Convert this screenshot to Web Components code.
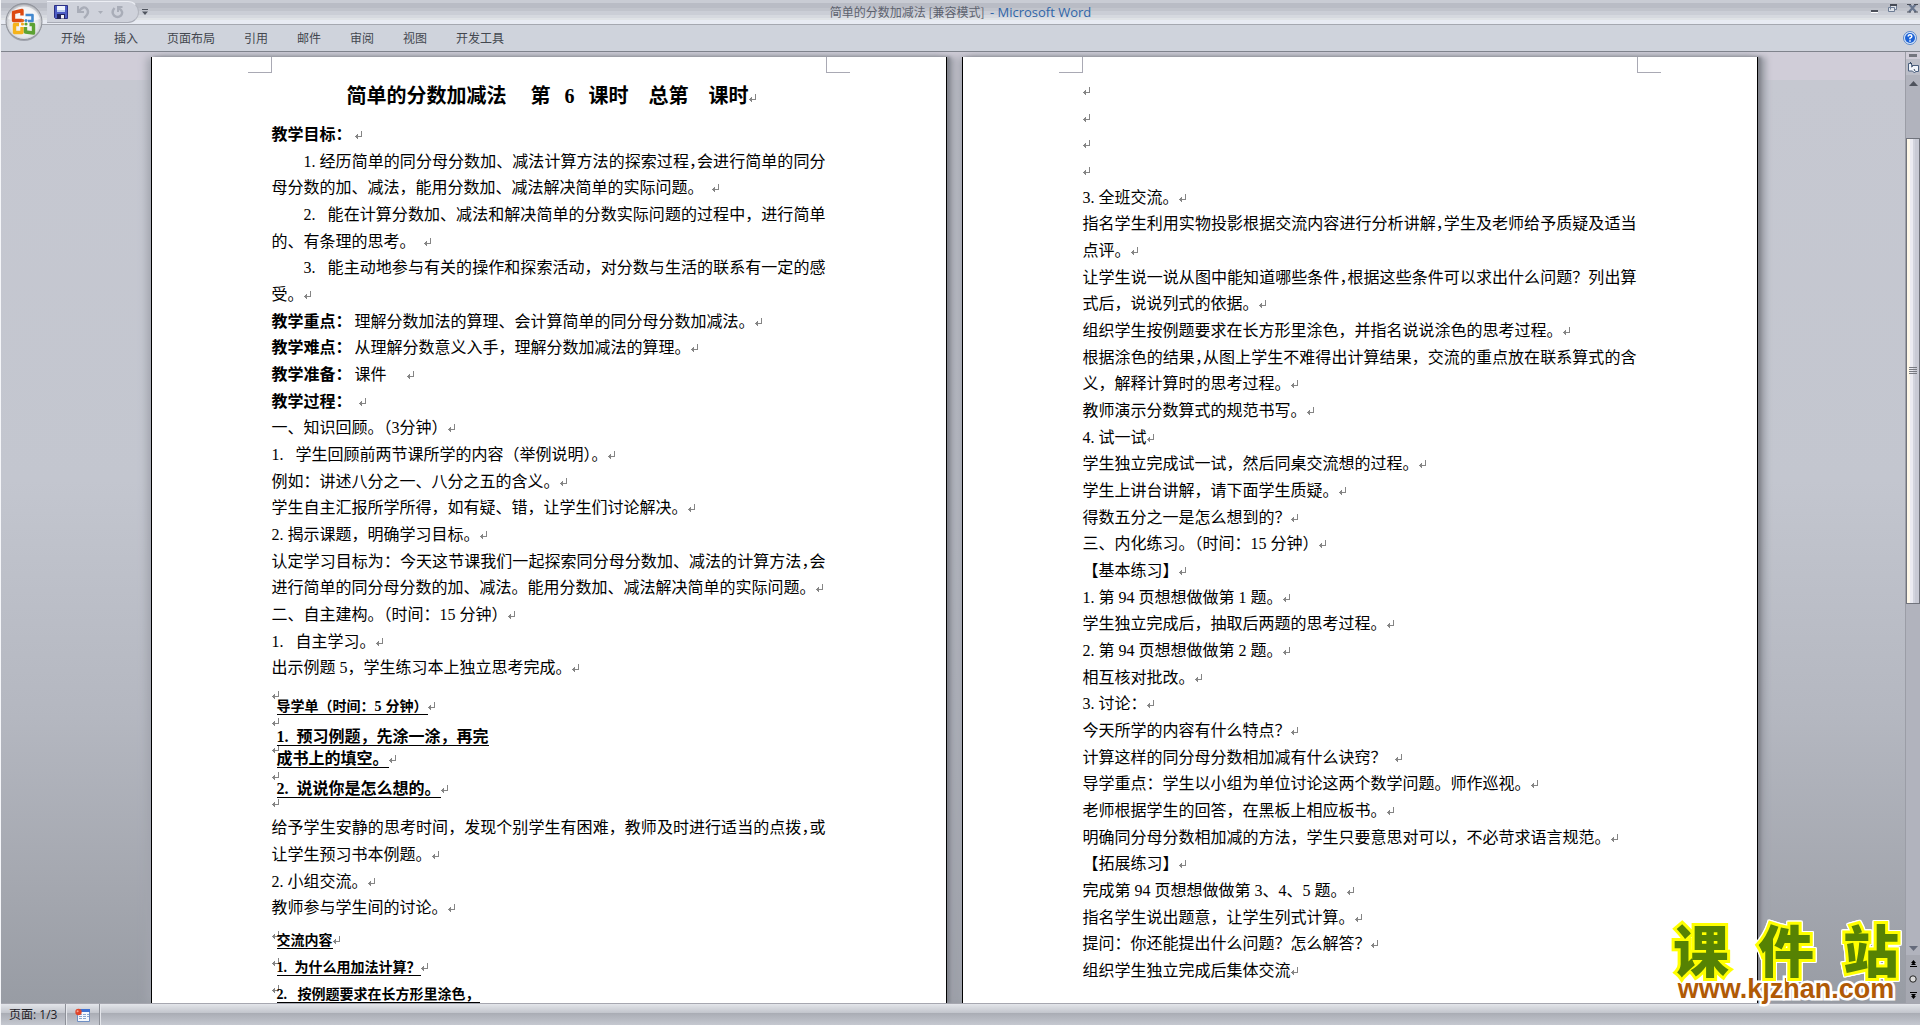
<!DOCTYPE html>
<html lang="zh-CN">
<head>
<meta charset="utf-8">
<title>简单的分数加减法 [兼容模式] - Microsoft Word</title>
<style>
html,body{height:100%;margin:0;overflow:hidden}
body{font-family:"Liberation Serif","Noto Sans CJK SC",serif;background:#c6c8d1}
</style>
</head>
<body>
<word-window>
  <title-bar slot="top" doc="简单的分数加减法 [兼容模式]" app="Microsoft Word"></title-bar>
  <ribbon-tabs slot="top">
    <ribbon-tab>开始</ribbon-tab><ribbon-tab>插入</ribbon-tab><ribbon-tab>页面布局</ribbon-tab><ribbon-tab>引用</ribbon-tab><ribbon-tab>邮件</ribbon-tab><ribbon-tab>审阅</ribbon-tab><ribbon-tab>视图</ribbon-tab><ribbon-tab>开发工具</ribbon-tab>
  </ribbon-tabs>

  <doc-page>
    <doc-title slot="title">简单的分数加减法<half-run gap="right">&nbsp;&nbsp;</half-run>第<half-run>&nbsp;</half-run><half-run gap="both">6</half-run><half-run>&nbsp;</half-run>课时<half-run>&nbsp;&nbsp;</half-run>总第<half-run>&nbsp;&nbsp;</half-run>课时</doc-title>
    <doc-line mark><doc-label>教学目标：</doc-label></doc-line>
    <doc-line indent fill><half-run>1.</half-run>经历简单的同分母分数加、减法计算方法的探索过程<tight-mark>，</tight-mark>会进行简单的同分</doc-line>
    <doc-line mark>母分数的加、减法，能用分数加、减法解决简单的实际问题。<half-run>&nbsp;</half-run></doc-line>
    <doc-line indent fill><half-run>2.&nbsp;</half-run>能在计算分数加、减法和解决简单的分数实际问题的过程中，进行简单</doc-line>
    <doc-line mark>的、有条理的思考。<half-run>&nbsp;</half-run></doc-line>
    <doc-line indent fill><half-run>3.&nbsp;</half-run>能主动地参与有关的操作和探索活动，对分数与生活的联系有一定的感</doc-line>
    <doc-line mark>受。</doc-line>
    <doc-line mark><doc-label>教学重点：</doc-label>理解分数加法的算理、会计算简单的同分母分数加减法。</doc-line>
    <doc-line mark><doc-label>教学难点：</doc-label>从理解分数意义入手，理解分数加减法的算理。</doc-line>
    <doc-line mark><doc-label>教学准备：</doc-label>课件<half-run gap="right">&nbsp;&nbsp;</half-run></doc-line>
    <doc-line mark><doc-label>教学过程：</doc-label>&nbsp;</doc-line>
    <doc-line mark>一、知识回顾。（<half-run>3</half-run>分钟）</doc-line>
    <doc-line mark><half-run>1.&nbsp;</half-run>学生回顾前两节课所学的内容（举例说明）。</doc-line>
    <doc-line mark>例如：讲述八分之一、八分之五的含义。</doc-line>
    <doc-line mark>学生自主汇报所学所得，如有疑、错，让学生们讨论解决。</doc-line>
    <doc-line mark><half-run>2.</half-run>揭示课题，明确学习目标。</doc-line>
    <doc-line fill>认定学习目标为：今天这节课我们一起探索同分母分数加、减法的计算方法<tight-mark>，</tight-mark>会</doc-line>
    <doc-line mark>进行简单的同分母分数的加、减法。能用分数加、减法解决简单的实际问题。</doc-line>
    <doc-line mark>二、自主建构。（时间：<half-run gap="right">15</half-run>分钟）</doc-line>
    <doc-line mark><half-run>1.&nbsp;</half-run>自主学习。</doc-line>
    <doc-line mark>出示例题<half-run gap="left">5</half-run>，学生练习本上独立思考完成。</doc-line>
    <text-frame rows="5" layout="guide">
      <frame-line size="small" mark>导学单（时间：<half-run gap="right">5</half-run>分钟）</frame-line>
      <frame-line><half-run gap="right">1.</half-run>预习例题，先涂一涂，再完</frame-line>
      <frame-line mark>成书上的填空。</frame-line>
      <frame-line mark><half-run gap="right">2.</half-run>说说你是怎么想的。</frame-line>
    </text-frame>
    <doc-line fill>给予学生安静的思考时间，发现个别学生有困难，教师及时进行适当的点拨<tight-mark>，</tight-mark>或</doc-line>
    <doc-line mark>让学生预习书本例题。</doc-line>
    <doc-line mark><half-run>2.</half-run>小组交流。</doc-line>
    <doc-line mark>教师参与学生间的讨论。</doc-line>
    <text-frame rows="3" layout="share">
      <frame-line size="small" mark>交流内容</frame-line>
      <frame-line size="small" mark><half-run gap="right">1.</half-run>为什么用加法计算？</frame-line>
      <frame-line size="small"><half-run>2.&nbsp;</half-run>按例题要求在长方形里涂色，</frame-line>
    </text-frame>
  </doc-page>

  <doc-page>
    <doc-line mark></doc-line>
    <doc-line mark></doc-line>
    <doc-line mark></doc-line>
    <doc-line mark></doc-line>
    <doc-line mark><half-run>3.</half-run>全班交流。</doc-line>
    <doc-line fill>指名学生利用实物投影根据交流内容进行分析讲解<tight-mark>，</tight-mark>学生及老师给予质疑及适当</doc-line>
    <doc-line mark>点评。</doc-line>
    <doc-line fill>让学生说一说从图中能知道哪些条件<tight-mark>，</tight-mark>根据这些条件可以求出什么问题？列出算</doc-line>
    <doc-line mark>式后，说说列式的依据。</doc-line>
    <doc-line mark>组织学生按例题要求在长方形里涂色，并指名说说涂色的思考过程。</doc-line>
    <doc-line fill>根据涂色的结果<tight-mark>，</tight-mark>从图上学生不难得出计算结果，交流的重点放在联系算式的含</doc-line>
    <doc-line mark>义，解释计算时的思考过程。</doc-line>
    <doc-line mark>教师演示分数算式的规范书写。</doc-line>
    <doc-line mark><half-run>4.</half-run>试一试</doc-line>
    <doc-line mark>学生独立完成试一试，然后同桌交流想的过程。</doc-line>
    <doc-line mark>学生上讲台讲解，请下面学生质疑。</doc-line>
    <doc-line mark>得数五分之一是怎么想到的？</doc-line>
    <doc-line mark>三、内化练习。（时间：<half-run gap="right">15</half-run>分钟）</doc-line>
    <doc-line mark>【基本练习】</doc-line>
    <doc-line mark><half-run>1.</half-run>第<half-run gap="both">94</half-run>页想想做做第<half-run gap="both">1</half-run>题。</doc-line>
    <doc-line mark>学生独立完成后，抽取后两题的思考过程。</doc-line>
    <doc-line mark><half-run>2.</half-run>第<half-run gap="both">94</half-run>页想想做做第<half-run gap="both">2</half-run>题。</doc-line>
    <doc-line mark>相互核对批改。</doc-line>
    <doc-line mark><half-run>3.</half-run>讨论：</doc-line>
    <doc-line mark>今天所学的内容有什么特点？</doc-line>
    <doc-line mark>计算这样的同分母分数相加减有什么诀窍？<half-run>&nbsp;</half-run></doc-line>
    <doc-line mark>导学重点：学生以小组为单位讨论这两个数学问题。师作巡视。</doc-line>
    <doc-line mark>老师根据学生的回答，在黑板上相应板书。</doc-line>
    <doc-line mark>明确同分母分数相加减的方法，学生只要意思对可以，不必苛求语言规范。</doc-line>
    <doc-line mark>【拓展练习】</doc-line>
    <doc-line mark>完成第<half-run gap="both">94</half-run>页想想做做第<half-run gap="left">3</half-run>、<half-run>4</half-run>、<half-run gap="right">5</half-run>题。</doc-line>
    <doc-line mark>指名学生说出题意，让学生列式计算。</doc-line>
    <doc-line mark>提问：你还能提出什么问题？怎么解答？</doc-line>
    <doc-line mark>组织学生独立完成后集体交流</doc-line>
  </doc-page>

  <scroll-rail slot="rail"></scroll-rail>
  <status-bar slot="bottom">页面: 1/3</status-bar>
  <site-logo slot="badge" name="课件站" url="www.kjzhan.com"></site-logo>
</word-window>

<script>
const define = (name, html, setup) => {
  const tpl = document.createElement('template');
  tpl.innerHTML = html.replace(/>\s+</g, '><').trim();
  customElements.define(name, class extends HTMLElement {
    constructor() {
      super();
      this.attachShadow({mode: 'open'}).append(tpl.content.cloneNode(true));
    }
    connectedCallback() { if (setup) setup(this, this.shadowRoot); }
  });
};

const RETURN_MARK = `<svg class="mark" width="8" height="9" viewBox="0 0 8 9" aria-hidden="true" shape-rendering="crispEdges"><path d="M6.500 0V5.500H2M2.500 3v5M1.500 4v3M0 5.500h3" fill="none" stroke="#858585"/></svg>`;

define('word-window', `
<style>
:host{display:grid;grid-template-rows:auto minmax(0,1fr) auto;height:100vh;position:relative;border-left:1px solid #f4f5f8;box-sizing:border-box}
.desk{display:flex;min-height:0;background:linear-gradient(#d0cdd8 0 28px,#c6c8d1 28px,#c3c6cf 45%,#b4b7c0 70%,#a4a7af 88%,#989ca4)}
.pages{flex:1;min-width:0;display:flex;justify-content:center;gap:15px;overflow:hidden;padding:5px 0 0 2px}
.badge{position:absolute;right:21px;bottom:22px}
</style>
<header><slot name="top"></slot></header>
<main class="desk"><div class="pages"><slot></slot></div><slot name="rail"></slot></main>
<footer><slot name="bottom"></slot></footer>
<div class="badge"><slot name="badge"></slot></div>`);

define('title-bar', `
<style>
:host{display:grid;grid-template-columns:1fr auto 1fr;align-items:center;height:24px;border-bottom:1px solid #a5a8b0;
 background:linear-gradient(#c9ccd4 0 3px,#b9bcc5 3px 8px,#c1c4cc 8px 11px,#cbced6 11px 15px,#d6d9df 15px 18px,#e0e3e6 18px 20px,#e8ebf3 20px);
 font:12px/16px "Noto Sans CJK SC",sans-serif;color:#5d626e}
button{all:unset;display:block;line-height:0}
.left{display:flex;align-items:center}
.quick{margin-left:46px;height:20px;width:84px;padding-left:7px;display:flex;align-items:center;gap:8px;border:1px solid #eceef4;border-left:0;border-bottom-color:#a9acb6;border-right-color:#b3b6bf;border-radius:0 12px 12px 0;background:#cfd2db}
.more{margin-left:3px}
.office{position:absolute;left:3px;top:2px;z-index:2}
h1{margin:0;font:inherit;white-space:pre}
h1 span{font-family:"Open Sans",sans-serif;color:#2f66a8;font-size:13px}
.win{display:flex;justify-content:flex-end;align-items:center;gap:9px;padding-right:2px;height:16px;align-self:start}
svg{display:block}
</style>
<div class="left">
<button class="office" aria-label="Office">
<svg width="40" height="40" viewBox="0 0 40 40"><defs><radialGradient id="b" cx=".5" cy=".55" r=".55"><stop offset="0" stop-color="#fff"/><stop offset=".7" stop-color="#e6e7ea"/><stop offset=".9" stop-color="#c4c6cb"/><stop offset="1" stop-color="#8d9098"/></radialGradient></defs>
<circle cx="20" cy="21" r="18" fill="#7e828c" opacity=".6"/><circle cx="20" cy="19.500" r="18" fill="url(#b)" stroke="#91949c"/>
<path d="M4 17a16.500 16.500 0 0 1 32 0q-16 6-32 0z" fill="#fff" opacity=".65"/>
<g fill="none" stroke-linejoin="round" stroke-width="3.400">
<path d="M18 17.500V18.500H9.500V10.500L18 8.500v5" stroke="#dd4a12"/><path d="M21.500 13h7v6h-4.500" stroke="#4389cf" stroke-width="2.600"/>
<path d="M18 25v5.500h-7.500V22.500H15" stroke="#f5b31c"/><path d="M21.500 25v5l8 1V22.500h-4" stroke="#5da233"/></g>
<circle cx="18.500" cy="18.500" r="1.600" fill="#e0611b"/><circle cx="22" cy="18.500" r="1.600" fill="#4389cf"/><circle cx="18.500" cy="22" r="1.600" fill="#f5a81c"/><circle cx="22" cy="22" r="1.600" fill="#5da233"/></svg></button>
<div class="quick">
<button aria-label="保存"><svg width="14" height="14" viewBox="0 0 14 14"><path d="M.5.5h13v13h-12l-1-1z" fill="#4c5cc4" stroke="#2b2f83"/><path d="M3 1h8v6H3z" fill="#eef3fc"/><path d="M3 5h8v2H3z" fill="#b9cdf0"/><path d="M3 9h8v5H3z" fill="#20235e"/><path d="M7 10h3v3.500H7z" fill="#f2f2f6"/></svg></button>
<button aria-label="撤消"><svg width="14" height="14" viewBox="0 0 14 14"><path d="M2 1v6h6" fill="none" stroke="#a9adb8" stroke-width="2"/><path d="M3 6Q8 0 11 4q3 4-3 9" fill="none" stroke="#a9adb8" stroke-width="2.400"/></svg></button>
<button aria-label="撤消列表"><svg width="5" height="3" viewBox="0 0 5 3"><path d="M0 0h5L2.500 3z" fill="#a9adb8"/></svg></button>
<button aria-label="重复"><svg width="13" height="14" viewBox="0 0 13 14"><path d="M3.500 3Q0 7 3 10.500q3.500 3 7 0 3-4-2-7" fill="none" stroke="#a9adb8" stroke-width="2.400"/><path d="M11.500 2H7v5" fill="none" stroke="#a9adb8" stroke-width="2"/></svg></button>
</div>
<button class="more" aria-label="自定义"><svg width="6" height="6" viewBox="0 0 6 6"><path d="M0 0h6v1H0zM0 2.500h6L3 6z" fill="#50555f"/></svg></button>
</div>
<h1></h1>
<div class="win">
<button aria-label="最小化"><svg width="8" height="14" viewBox="0 0 8 14"><path d="M0 9h7v2H0z" fill="#4c505a"/><path d="M0 11h7v1H0z" fill="#fff"/></svg></button>
<button aria-label="还原"><svg width="10" height="9" viewBox="0 0 10 9"><path d="M2.500 5.500V1.500h6v4h-2M.5 3.500h6v4h-6z" fill="#dfe3ea" stroke="#6d7c94"/><path d="M2 0h7v2H2z" fill="#454a55"/></svg></button>
<button aria-label="关闭"><svg width="11" height="9" viewBox="0 0 11 9"><path d="M2 0l7 8M9 0L2 8" stroke="#68768f" stroke-width="2.200"/><path d="M0 .500h4M7 .500h4M0 8h4M7 8h4" stroke="#4c505a"/></svg></button>
</div>`, (el, root) => {
  const h = root.querySelector('h1');
  const s = document.createElement('span');
  s.textContent = '- ' + el.getAttribute('app');
  h.replaceChildren(el.getAttribute('doc') + '  ', s);
});

define('ribbon-tabs', `
<style>
:host{display:flex;align-items:center;justify-content:space-between;height:26px;padding:0 3px 0 60px;background:#cfd3dc;border-bottom:1px solid #7f838c}
nav{display:flex;gap:29px}
button{all:unset;line-height:0}
</style>
<nav><slot></slot></nav>
<button aria-label="帮助"><svg width="14" height="14" viewBox="0 0 14 14"><circle cx="7" cy="7" r="6.500" fill="#dbe9fb" stroke="#5b86c8"/><circle cx="7" cy="7" r="5" fill="#1c62d6"/><path d="M5.200 5.600Q5.200 3.800 7 3.800T8.800 5.500Q8.800 6.500 7 7.300V8.300M7 9.200v1.500" fill="none" stroke="#fff" stroke-width="1.500"/></svg></button>`);

define('ribbon-tab', `
<style>
:host{display:block}
button{all:unset;font:12px/20px "Noto Sans CJK SC",sans-serif;color:#43474f;display:block;white-space:nowrap}
</style><button><slot></slot></button>`);

define('doc-page', `
<style>
:host{display:block;flex:none;width:554px;padding:0 120px;background:#fff;border:solid #000;border-width:0 1px;align-self:stretch;min-height:0;position:relative;
 box-shadow:3px 0 3px #80838b,8px 0 6px #9ea1aa,-4px 0 8px #a2a5ae}
.corners{display:flex;justify-content:space-between;margin:0 -24px;height:16px}
.corners i{width:23px;border:solid #a9a9b4;border-width:0 1px 1px 0}
.corners i+i{border-width:0 0 1px 1px}
.body{margin-top:4px;display:grid;grid-auto-rows:27px 27px 26px;align-items:center}
</style>
<div class="corners"><i></i><i></i></div>
<slot name="title"></slot>
<div class="body"><slot></slot></div>`);

define('doc-title', `
<style>
:host{display:block;margin:4px 0 6px;padding-left:6px;text-align:center;font-size:20px;font-weight:700;line-height:38px;white-space:nowrap}
</style><slot></slot>${RETURN_MARK}`);

define('doc-line', `
<style>
:host{display:block;font-size:16px;line-height:26px;white-space:nowrap;color:#000}
:host([indent]){padding-left:32px}
:host([fill]){text-align:justify;text-align-last:justify}
:host(:not([mark])) .mark{display:none}
</style><slot></slot>${RETURN_MARK}`);

define('doc-label', `
<style>:host{font-weight:700;margin-right:3px}</style><slot></slot>`);

define('tight-mark', `
<style>:host{font-feature-settings:"halt"}</style><slot></slot>`);

define('half-run', `
<style>
:host{display:inline-block;white-space:nowrap;text-align:left;text-align-last:left}
:host([gap=left]),:host([gap=both]){margin-left:4px}
:host([gap=right]),:host([gap=both]){margin-right:4px}
</style><slot></slot>`, el => { el.style.width = `calc(1em * ${el.textContent.length} / 2)`; });

define('text-frame', `
<style>
:host{display:grid;grid-template-columns:5px 1fr;align-self:start}
.marks{display:grid;grid-auto-rows:27px;line-height:28px;font-size:16px}
.lines{display:flex;flex-direction:column;align-items:flex-start}
:host([layout=guide]) .lines{padding-top:15px}
:host([layout=guide]) ::slotted(:nth-child(2)){margin-top:8px}
:host([layout=guide]) ::slotted(:nth-child(4)){margin-top:8px}
:host([layout=share]) .lines{padding-top:9px;gap:5px}
</style>
<div class="marks"></div><div class="lines"><slot></slot></div>`, (el, root) => {
  const rows = +el.getAttribute('rows');
  el.style.gridRow = 'span ' + rows;
  root.querySelector('.marks').innerHTML = `<span>${RETURN_MARK}</span>`.repeat(rows);
});

define('frame-line', `
<style>
:host{display:block;font-size:16px;font-weight:700;line-height:22px;white-space:nowrap}
:host([size=small]){font-size:14px}
span{border-bottom:1px solid #000}
:host(:not([mark])) .mark{display:none}
</style><span><slot></slot></span>${RETURN_MARK}`);

define('scroll-rail', `
<style>
:host{display:flex;flex-direction:column;flex:none;width:14px;background:#b1b3bd;border-left:1px solid #9b9da6}
button{all:unset;display:grid;place-items:center;box-sizing:border-box;width:100%}
.split{height:7px;background:#d0cdd8}
.split svg{display:block}
.ruler{height:16px;background:#bcbec8}
.up{height:16px}
.track{flex:1;display:flex;flex-direction:column;padding-top:47px;min-height:0}
.thumb{flex:0 0 58%;border:1px solid #70737c;box-sizing:border-box;display:grid;place-items:center;background:linear-gradient(90deg,#fff8e8 0 3px,#ebebf2 3px 6px,#d2d4de 6px 8px,#c8cad5 8px)}
.down{height:14px}
.nav{height:16px;background:#a6a8b1}
</style>
<div class="split"><svg width="13" height="6" viewBox="0 0 13 6"><path d="M3 2h8v3H3z" fill="#73757e"/></svg></div>
<button class="ruler" aria-label="标尺"><svg width="13" height="13" viewBox="0 0 13 13"><path d="M1.500 2.500h3v2h7v6h-3l-1 1.500-2-2h-4z" fill="#f1f4fa" stroke="#4a5f7e"/><path d="M3 1l2 2M7 8l1 2M4 6l2-1" stroke="#35475f"/></svg></button>
<button class="up" aria-label="向上滚动"><svg width="9" height="5" viewBox="0 0 9 5"><path d="M0 5h9L4.500 0z" fill="#4f535d"/></svg></button>
<div class="track"><div class="thumb"><svg width="8" height="8" viewBox="0 0 8 8" shape-rendering="crispEdges"><path d="M0 .500h8M0 2.500h8M0 4.500h8M0 6.500h8" stroke="#777a82"/></svg></div></div>
<button class="down" aria-label="向下滚动"><svg width="9" height="5" viewBox="0 0 9 5"><path d="M0 0h9L4.500 5z" fill="#656b7b"/></svg></button>
<button class="nav" aria-label="前一页"><svg width="7" height="7" viewBox="0 0 7 7"><path d="M3.500 0L6 3H1zM3.500 2L6 5H1zM0 6h7v1H0z"/></svg></button>
<button class="nav" aria-label="选择浏览对象"><svg width="8" height="8" viewBox="0 0 8 8"><circle cx="4" cy="4" r="3.200" fill="#d9d9d9" stroke="#222"/></svg></button>
<button class="nav" aria-label="下一页"><svg width="7" height="7" viewBox="0 0 7 7"><path d="M0 0h7v1H0zM1 2h5L3.500 5zM1 4h5L3.500 7z"/></svg></button>`);

define('status-bar', `
<style>
:host{display:flex;height:21px;border-top:1px solid #a6a7b0;background:linear-gradient(#e3e5ea 0,#c2c5cc 9px,#a9acb4 9px,#c5c8d0);font:12px/20px "Open Sans","Noto Sans CJK SC",sans-serif;color:#1e2026}
.cell{padding:0 8px;border-right:1px solid #8d9098;box-shadow:1px 0 #e4e6eb;display:flex;align-items:center}
.rec{margin-left:1px}
button{all:unset;line-height:0}
</style>
<div class="cell"><slot></slot></div>
<div class="cell rec"><button aria-label="录制宏"><svg width="16" height="14" viewBox="0 0 16 14"><path d="M2.500 1.500h12v12h-12z" fill="#f5f8fd" stroke="#6f8fc4"/><path d="M3 1h12v3H3z" fill="#3d6fd0"/><path d="M4 6.500h3M8 6.500h3M12 6.500h2M4 8.500h3M8 8.500h3M12 8.500h2M4 10.500h3M8 10.500h3" stroke="#8aa6cf"/><circle cx="3.500" cy="4" r="3.200" fill="#e0452a"/><circle cx="2.600" cy="3.200" r="1" fill="#f7a491"/></svg></button></div>`);

define('site-logo', `
<style>
:host{display:block;width:226px;white-space:nowrap}
.name{font:900 56px/54px "Noto Sans CJK SC",sans-serif;color:#568203;-webkit-text-stroke:6px #ffff00;paint-order:stroke fill;text-align-last:justify;filter:drop-shadow(1px 0 #fff) drop-shadow(-1px 0 #fff) drop-shadow(0 1px #fff) drop-shadow(0 -1px #fff)}
a{display:block;font:700 27px/28px "Liberation Sans",sans-serif;color:#b05a06;text-decoration:none;-webkit-text-stroke:5px #fff;paint-order:stroke fill;text-align:center}
</style>
<div class="name"></div><a href="#"></a>`, (el, root) => {
  root.querySelector('.name').textContent = el.getAttribute('name');
  root.querySelector('a').textContent = el.getAttribute('url');
});
</script>
</body>
</html>
